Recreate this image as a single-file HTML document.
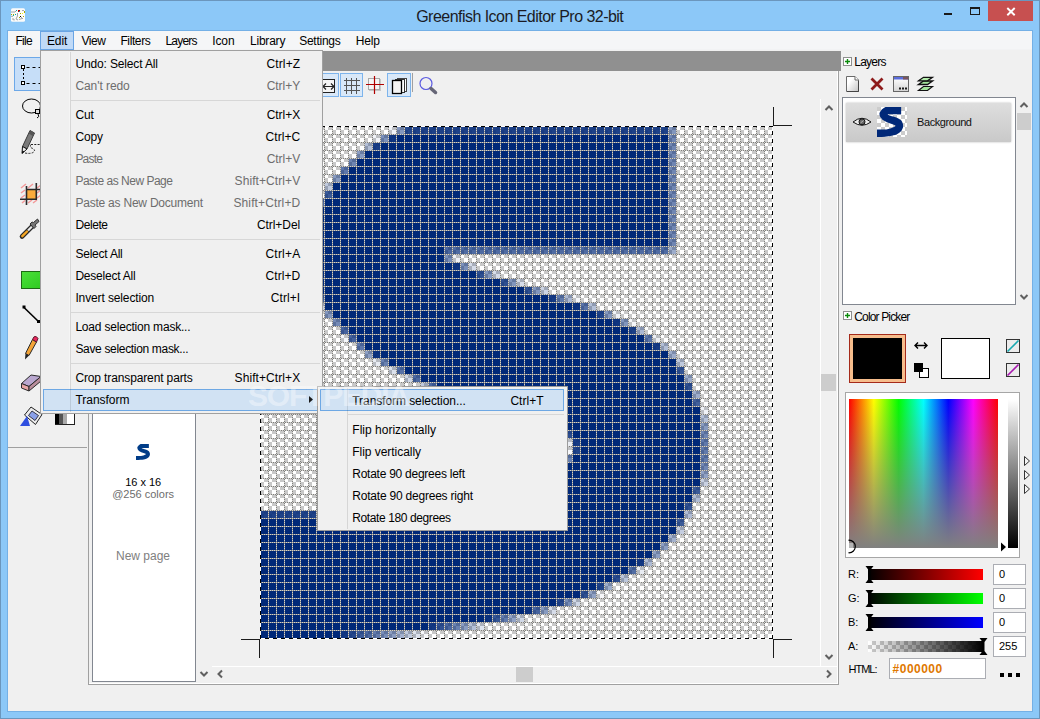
<!DOCTYPE html>
<html><head><meta charset="utf-8"><title>Greenfish Icon Editor Pro 32-bit</title>
<style>
html,body{margin:0;padding:0}
body{width:1040px;height:719px;overflow:hidden;position:relative;background:#8cc8f8;font-family:"Liberation Sans", sans-serif;font-size:12px;color:#000}
div,span.t,svg{position:absolute;box-sizing:border-box}
span.t{white-space:nowrap;display:block}

.b{background:#f0f0f0}

</style></head><body>
<div style="left:0px;top:0px;width:1040px;height:719px;border:1px solid #6b96bd"></div>
<svg style="left:11px;top:8px" width="14" height="14" viewBox="11 8 14 14"><rect x="11" y="8.200" width="14" height="13.600" rx="1.500" fill="#fbfbfa"/><path d="M11 12 h4 l1.500 -1.500 M11 16.300 h2 M17.500 13 v3 l-1.500 3 l2 1 M21 17 l2 2 M22 10.500 h2 M12 19 h2 v1.500 M19 19.500 l3 -1" stroke="#9a9a9a" stroke-width="0.900" fill="none"/><g shape-rendering="crispEdges"><rect x="16" y="10" width="1.300" height="1" fill="#0aa"/><rect x="18" y="10" width="2" height="1.800" fill="#c00000"/><rect x="19.300" y="11.200" width="1" height="1" fill="#0aa"/><rect x="21.800" y="13" width="1.300" height="1.300" fill="#ff0"/><rect x="24" y="11" width="1" height="2" fill="#a8a800"/><rect x="20" y="13" width="1" height="1" fill="#a8a800"/><rect x="15" y="14" width="1" height="1" fill="#0aa"/><rect x="11" y="14" width="1" height="1" fill="#a8a800"/><rect x="13" y="14" width="1" height="1" fill="#a8a800"/><rect x="13" y="15" width="1" height="1" fill="#0aa"/><rect x="20" y="16" width="1" height="1" fill="#000"/><rect x="19" y="17" width="1" height="1" fill="#a8a800"/><rect x="23" y="16" width="1" height="1" fill="#a8a800"/></g></svg>
<div style="left:944px;top:12.5px;width:8px;height:2px;background:#1a1a1a"></div>
<div style="left:970px;top:7px;width:10px;height:8px;border:1px solid #1a1a1a;border-top-width:2px"></div>
<div style="left:988px;top:1px;width:45px;height:20px;background:#c75050"></div>
<svg style="left:1005px;top:6px" width="12" height="11" viewBox="0 0 12 11"><path d="M2.300 2 L9.700 9.300 M9.700 2 L2.300 9.300" stroke="#fff" stroke-width="1.900" fill="none"/></svg>
<div style="left:7px;top:30px;width:1026px;height:682px;background:#74b0e6"></div>
<div style="left:8px;top:31px;width:1024px;height:680px;background:#f0f0f0"></div>
<div style="left:8px;top:31px;width:1024px;height:18px;background:#f5f6f7"></div>
<div style="left:8px;top:49px;width:1024px;height:1px;background:#f2f3f4"></div>
<div style="left:40px;top:31px;width:34px;height:19px;background:#c0daf7;border:1px solid #69a4e4"></div>
<div style="left:8px;top:447px;width:79px;height:1px;background:#a0a0a0"></div>
<div style="left:14px;top:57px;width:34px;height:34px;background:#c6def8;border:1px solid #6ca8e8"></div>
<svg style="left:8px;top:51px" width="80" height="395" viewBox="8 51 80 395">
<g fill="none" stroke="#000">
<path d="M24.500 67.500 H46 M24.500 83.500 H46" stroke-dasharray="3 3" stroke-dashoffset="-2"/>
<path d="M23.500 69 V82" stroke-dasharray="2 2"/>
<rect x="21.500" y="65.500" width="3" height="3" fill="#fff"/><rect x="21.500" y="81.500" width="3" height="3" fill="#fff"/>
<ellipse cx="31.500" cy="106" rx="9" ry="7"/>
<rect x="35.500" y="109.500" width="4" height="4" fill="#ddd"/><path d="M38 114 q2 3 -1 4"/>
</g>
<path d="M30 130.500 L34.500 133 L27 149 L22.500 146.500Z" fill="#7a7a7a" stroke="#3a3a3a"/><path d="M30 130.500 L34.500 133 L33 136 L28.700 133.500Z" fill="#555"/><path d="M22.500 146.500 L27 149 L22 153.500Z" fill="#eee" stroke="#111"/><path d="M22 153.500 l0.500 -3 2 1.200z" fill="#000"/>
<path d="M31 144.500 h9 M31 144.500 q-2 3 2 4 q3 2 0 4 q-3 1.500 -8 0.500" fill="none" stroke="#222" stroke-dasharray="2 1.300"/>
<g stroke="#f39a9a" stroke-width="1.500"><path d="M21 188 l5 -4 M21 193 l4 -3 M21 198 l4 -3 M28 188 l5 -4 M37 188 l4 -3 M37 193 l4 -3 M37 198 l4 -3 M28 203 l4 -3 M33 203 l4 -3 M22 203 l3 -2.500"/></g>
<rect x="26.500" y="189.500" width="9.500" height="9.500" fill="#fbab3c"/>
<path d="M26.500 186 V205 M20 199.300 H37 M36.300 183 V199.500 M26.500 189.500 H40" stroke="#2a2a2a" stroke-width="1.600" fill="none"/>
<path d="M22 236.500 L32.500 226" stroke="#2a2a2a" stroke-width="4.600" stroke-linecap="round" fill="none"/><path d="M22.300 236.200 L27 231.500" stroke="#f6a623" stroke-width="2.400" stroke-linecap="round" fill="none"/><path d="M28 230.500 L32 226.500" stroke="#e8e8e8" stroke-width="2.200" fill="none"/>
<path d="M30 224 L34 228.500 L36 226.500 L35 225 L39 221.500 L37.500 219 L33.500 222.500 L32 222Z" fill="#777" stroke="#333"/>
<defs><linearGradient id="gg" x1="0" y1="0" x2="1" y2="1"><stop offset="0" stop-color="#4be03a"/><stop offset="1" stop-color="#2cc81e"/></linearGradient></defs>
<rect x="21.500" y="271.500" width="24" height="17" fill="url(#gg)" stroke="#1d6a14"/>
<path d="M24 307.500 L38.500 321.500" stroke="#000" stroke-width="1.600" fill="none"/><rect x="22.500" y="305.500" width="3" height="3"/><rect x="37" y="320" width="3" height="3"/>
<path d="M32.500 339.500 L36.500 342 L29 355.500 L25.500 353.500Z" fill="#f3a336" stroke="#2a2a2a"/><path d="M25.500 353.500 L29 355.500 L25 359.500Z" fill="#222"/><path d="M32.500 339.500 L34 336.800 Q36.500 335.500 38 338.500 L36.500 342Z" fill="#e8265e" stroke="#5a1a2a"/>
<path d="M21.500 383.500 L31 375 L41 376.500 L29 386.500Z" fill="#b9a7cf" stroke="#2a2a2a"/><path d="M21.500 383.500 L29 386.500 V391 L21.500 388Z" fill="#e7a6a6" stroke="#2a2a2a"/><path d="M29 386.500 L41 376.500 V381 L29 391Z" fill="#b98e9c" stroke="#2a2a2a"/>
<path d="M24.500 415 L31 407 L42 414.500 L35.500 424.500Z" fill="#ececec" stroke="#222" stroke-linejoin="round"/><path d="M28.500 415.500 L32 411 L38.500 415.500 L35 420.500Z" fill="#8aa0e8" stroke="#334"/><path d="M20 426 H30 L27 416Z" fill="#2f4fe0"/>
</svg>
<div style="left:55px;top:413px;width:20px;height:12px;background:linear-gradient(90deg,#000 0 22%,#555 22% 42%,#aaa 42% 64%,#fff 64%);border:1px solid #222;border-left:none"></div>
<div style="left:88px;top:51px;width:751px;height:634px;border:1px solid #a0a0a0;border-top:none"></div>
<div style="left:89px;top:51px;width:749px;height:633px;border:1px solid #fff;border-top:none;border-left:none"></div>
<div style="left:89px;top:51px;width:752px;height:20px;background:#909090"></div>
<div style="left:92px;top:60px;width:104px;height:622px;background:#fff;border:1px solid #828790"></div>
<svg style="left:136px;top:444px" width="16" height="16" viewBox="0 0 64 64"><path d="M18.3 0.15 L51.5 0.15 L51.5 15.65 L23.2 15.65 L22.8 16 L23.5 16.5 L25.5 17.5 L28.5 18.5 L31.5 19.5 L34.5 20.5 L38 21.5 L41 22.5 L43.5 23.5 L45.5 24.5 L47.3 25.5 L48.7 26.5 L50.3 27.5 L51.4 28.5 L52.3 29.5 L52.8 30.5 L53.4 31.5 L53.8 32.5 L54.4 33.5 L54.7 34.5 L55 35.5 L55.3 36.5 L55.5 38 L55.6 40 L55.6 42 L55.4 43.5 L55.2 44.5 L54.7 45.5 L54.3 46.5 L53.8 47.5 L53.3 48.5 L52.7 49.5 L52.2 50.5 L51.3 51.5 L50.4 52.5 L49.4 53.5 L48.2 54.5 L46.7 55.5 L45 56.5 L43.2 57.5 L41.3 58.5 L38.5 59.5 L35.3 60.5 L31 61.5 L25 62.5 L17 63.4 L10 63.95 L0 64 L0 48.15 L20 48.15 L30 45.5 L36 42.8 L38.5 41.5 L39.4 40 L38.5 38.8 L33 36.8 L27 34.7 L21 32.5 L19.2 31.5 L17.3 30.5 L15.4 29.5 L13.6 28.5 L12.4 27.5 L11.3 26.5 L10.3 25.5 L9.5 24.5 L8.5 23.5 L7.8 22.5 L6.5 20 L5.5 17 L5.2 14 L5.8 11.5 L7 9.8 L8.25 8.5 L8.7 7.5 L9.5 6.5 L10.35 5.5 L11.4 4.5 L12.5 3.5 L13.7 2.5 L15.4 1.5Z" fill="#003c88"/></svg>
<svg style="left:197.5px;top:668px" width="12" height="12" viewBox="-6 -6 12 12"><path d="M-3.500 -2 L0 1.500 L3.500 -2" fill="none" stroke="#606060" stroke-width="2"/></svg>
<div style="left:212px;top:666px;width:625px;height:1px;background:#fff"></div>
<svg style="left:214px;top:668px" width="12" height="12" viewBox="-6 -6 12 12"><path d="M2 -3.500 L-1.500 0 L2 3.500" fill="none" stroke="#606060" stroke-width="2"/></svg>
<svg style="left:823px;top:668px" width="12" height="12" viewBox="-6 -6 12 12"><path d="M-2 -3.500 L1.500 0 L-2 3.500" fill="none" stroke="#606060" stroke-width="2"/></svg>
<div style="left:516px;top:667px;width:17px;height:15px;background:#cdcdcd"></div>
<div style="left:820px;top:99px;width:1px;height:567px;background:#fff"></div>
<svg style="left:822.5px;top:102px" width="12" height="12" viewBox="-6 -6 12 12"><path d="M-3.500 2 L0 -1.500 L3.500 2" fill="none" stroke="#606060" stroke-width="2"/></svg>
<svg style="left:822.5px;top:651px" width="12" height="12" viewBox="-6 -6 12 12"><path d="M-3.500 -2 L0 1.500 L3.500 -2" fill="none" stroke="#606060" stroke-width="2"/></svg>
<div style="left:821px;top:374px;width:15px;height:17px;background:#cdcdcd"></div>
<div style="left:300px;top:73px;width:39px;height:24px;background:#d9e8f8;border:1px solid #7db4ec"></div>
<div style="left:340px;top:73px;width:23px;height:24px;background:#d9e8f8;border:1px solid #7db4ec"></div>
<div style="left:387px;top:73px;width:24px;height:24px;background:#d9e8f8;border:1px solid #7db4ec"></div>
<svg style="left:300px;top:72px" width="150" height="27" viewBox="300 72 150 27">
<rect x="320.500" y="79.500" width="14" height="13" fill="#f4f4f4" stroke="#222"/>
<path d="M323 86.500 H334 M326 83.500 l-3 3 3 3 M331 83.500 l3 3 -3 3" stroke="#222" stroke-width="1.200" fill="none"/>
<path d="M346.500 78 V94 M351.500 78 V94 M356.500 78 V94 M344 80.500 H360 M344 85.500 H360 M344 90.500 H360" stroke="#555" stroke-width="1" fill="none"/>
<rect x="369" y="79" width="12" height="12" fill="#c8c8c8"/><rect x="368.500" y="78.500" width="11" height="11" fill="#f6f6f6" stroke="#aaa"/>
<path d="M374.500 76 V94 M366 84.500 H384" stroke="#b00000" stroke-width="1.200" fill="none"/>
<rect x="397.500" y="78.500" width="9" height="13" fill="#fff" stroke="#444"/><rect x="395.500" y="79.500" width="9" height="13" fill="#fff" stroke="#333"/>
<rect x="392.500" y="80.500" width="9" height="13" fill="#f4f4f4" stroke="#000" stroke-width="1.300"/>
<path d="M412.500 73 V92" stroke="#a0a0a0"/>
<circle cx="426" cy="83.500" r="6" fill="none" stroke="#5b5be0" stroke-width="1.200"/>
<path d="M431 88.500 L435.500 92.500" stroke="#667" stroke-width="3.500" stroke-linecap="round"/>
</svg>
<svg style="left:260px;top:126px" width="513" height="513" viewBox="0 0 513 513" shape-rendering="crispEdges">
<defs>
<pattern id="ck" width="8" height="8" patternUnits="userSpaceOnUse"><rect width="8" height="8" fill="#fff"/><rect x="4" width="4" height="4" fill="#c8c8c8"/><rect y="4" width="4" height="4" fill="#c8c8c8"/></pattern>
<pattern id="gr" width="8" height="8" patternUnits="userSpaceOnUse"><rect width="8" height="1" fill="#808080"/><rect width="1" height="8" fill="#808080"/><g fill="#d3d1cb"><rect width="1" height="1"/><rect x="2" width="1" height="1"/><rect x="4" width="1" height="1"/><rect x="6" width="1" height="1"/><rect y="2" width="1" height="1"/><rect y="4" width="1" height="1"/><rect y="6" width="1" height="1"/></g></pattern>
</defs>
<rect width="513" height="513" fill="url(#ck)"/>
<g fill="#002878"><rect x="128" y="0" width="8" height="8" opacity="0.06"/><rect x="136" y="0" width="8" height="8" opacity="0.48"/><rect x="144" y="0" width="8" height="8" opacity="0.85"/><rect x="152" y="0" width="8" height="8" opacity="0.88"/><rect x="160" y="0" width="8" height="8" opacity="0.88"/><rect x="168" y="0" width="8" height="8" opacity="0.88"/><rect x="176" y="0" width="8" height="8" opacity="0.88"/><rect x="184" y="0" width="8" height="8" opacity="0.88"/><rect x="192" y="0" width="8" height="8" opacity="0.88"/><rect x="200" y="0" width="8" height="8" opacity="0.88"/><rect x="208" y="0" width="8" height="8" opacity="0.88"/><rect x="216" y="0" width="8" height="8" opacity="0.88"/><rect x="224" y="0" width="8" height="8" opacity="0.88"/><rect x="232" y="0" width="8" height="8" opacity="0.88"/><rect x="240" y="0" width="8" height="8" opacity="0.88"/><rect x="248" y="0" width="8" height="8" opacity="0.88"/><rect x="256" y="0" width="8" height="8" opacity="0.88"/><rect x="264" y="0" width="8" height="8" opacity="0.88"/><rect x="272" y="0" width="8" height="8" opacity="0.88"/><rect x="280" y="0" width="8" height="8" opacity="0.88"/><rect x="288" y="0" width="8" height="8" opacity="0.88"/><rect x="296" y="0" width="8" height="8" opacity="0.88"/><rect x="304" y="0" width="8" height="8" opacity="0.88"/><rect x="312" y="0" width="8" height="8" opacity="0.88"/><rect x="320" y="0" width="8" height="8" opacity="0.88"/><rect x="328" y="0" width="8" height="8" opacity="0.88"/><rect x="336" y="0" width="8" height="8" opacity="0.88"/><rect x="344" y="0" width="8" height="8" opacity="0.88"/><rect x="352" y="0" width="8" height="8" opacity="0.88"/><rect x="360" y="0" width="8" height="8" opacity="0.88"/><rect x="368" y="0" width="8" height="8" opacity="0.88"/><rect x="376" y="0" width="8" height="8" opacity="0.88"/><rect x="384" y="0" width="8" height="8" opacity="0.88"/><rect x="392" y="0" width="8" height="8" opacity="0.88"/><rect x="400" y="0" width="8" height="8" opacity="0.88"/><rect x="408" y="0" width="8" height="8" opacity="0.49"/><rect x="112" y="8" width="8" height="8" opacity="0.05"/><rect x="120" y="8" width="8" height="8" opacity="0.52"/><rect x="128" y="8" width="8" height="8" opacity="0.94"/><rect x="136" y="8" width="272" height="8"/><rect x="408" y="8" width="8" height="8" opacity="0.56"/><rect x="104" y="16" width="8" height="8" opacity="0.30"/><rect x="112" y="16" width="8" height="8" opacity="0.90"/><rect x="120" y="16" width="288" height="8"/><rect x="408" y="16" width="8" height="8" opacity="0.56"/><rect x="96" y="24" width="8" height="8" opacity="0.46"/><rect x="104" y="24" width="304" height="8"/><rect x="408" y="24" width="8" height="8" opacity="0.56"/><rect x="88" y="32" width="8" height="8" opacity="0.57"/><rect x="96" y="32" width="312" height="8"/><rect x="408" y="32" width="8" height="8" opacity="0.56"/><rect x="80" y="40" width="8" height="8" opacity="0.63"/><rect x="88" y="40" width="320" height="8"/><rect x="408" y="40" width="8" height="8" opacity="0.56"/><rect x="72" y="48" width="8" height="8" opacity="0.47"/><rect x="80" y="48" width="328" height="8"/><rect x="408" y="48" width="8" height="8" opacity="0.56"/><rect x="64" y="56" width="8" height="8" opacity="0.25"/><rect x="72" y="56" width="336" height="8"/><rect x="408" y="56" width="8" height="8" opacity="0.56"/><rect x="64" y="64" width="8" height="8" opacity="0.77"/><rect x="72" y="64" width="336" height="8"/><rect x="408" y="64" width="8" height="8" opacity="0.56"/><rect x="56" y="72" width="8" height="8" opacity="0.70"/><rect x="64" y="72" width="344" height="8"/><rect x="408" y="72" width="8" height="8" opacity="0.56"/><rect x="48" y="80" width="8" height="8" opacity="0.52"/><rect x="56" y="80" width="352" height="8"/><rect x="408" y="80" width="8" height="8" opacity="0.56"/><rect x="40" y="88" width="8" height="8" opacity="0.18"/><rect x="48" y="88" width="360" height="8"/><rect x="408" y="88" width="8" height="8" opacity="0.56"/><rect x="40" y="96" width="8" height="8" opacity="0.46"/><rect x="48" y="96" width="360" height="8"/><rect x="408" y="96" width="8" height="8" opacity="0.56"/><rect x="40" y="104" width="8" height="8" opacity="0.70"/><rect x="48" y="104" width="360" height="8"/><rect x="408" y="104" width="8" height="8" opacity="0.56"/><rect x="40" y="112" width="8" height="8" opacity="0.77"/><rect x="48" y="112" width="360" height="8"/><rect x="408" y="112" width="8" height="8" opacity="0.56"/><rect x="40" y="120" width="8" height="8" opacity="0.66"/><rect x="48" y="120" width="136" height="8"/><rect x="184" y="120" width="8" height="8" opacity="0.71"/><rect x="192" y="120" width="8" height="8" opacity="0.69"/><rect x="200" y="120" width="8" height="8" opacity="0.69"/><rect x="208" y="120" width="8" height="8" opacity="0.69"/><rect x="216" y="120" width="8" height="8" opacity="0.69"/><rect x="224" y="120" width="8" height="8" opacity="0.69"/><rect x="232" y="120" width="8" height="8" opacity="0.69"/><rect x="240" y="120" width="8" height="8" opacity="0.69"/><rect x="248" y="120" width="8" height="8" opacity="0.69"/><rect x="256" y="120" width="8" height="8" opacity="0.69"/><rect x="264" y="120" width="8" height="8" opacity="0.69"/><rect x="272" y="120" width="8" height="8" opacity="0.69"/><rect x="280" y="120" width="8" height="8" opacity="0.69"/><rect x="288" y="120" width="8" height="8" opacity="0.69"/><rect x="296" y="120" width="8" height="8" opacity="0.69"/><rect x="304" y="120" width="8" height="8" opacity="0.69"/><rect x="312" y="120" width="8" height="8" opacity="0.69"/><rect x="320" y="120" width="8" height="8" opacity="0.69"/><rect x="328" y="120" width="8" height="8" opacity="0.69"/><rect x="336" y="120" width="8" height="8" opacity="0.69"/><rect x="344" y="120" width="8" height="8" opacity="0.69"/><rect x="352" y="120" width="8" height="8" opacity="0.69"/><rect x="360" y="120" width="8" height="8" opacity="0.69"/><rect x="368" y="120" width="8" height="8" opacity="0.69"/><rect x="376" y="120" width="8" height="8" opacity="0.69"/><rect x="384" y="120" width="8" height="8" opacity="0.69"/><rect x="392" y="120" width="8" height="8" opacity="0.69"/><rect x="400" y="120" width="8" height="8" opacity="0.69"/><rect x="408" y="120" width="8" height="8" opacity="0.39"/><rect x="40" y="128" width="8" height="8" opacity="0.55"/><rect x="48" y="128" width="136" height="8"/><rect x="184" y="128" width="8" height="8" opacity="0.52"/><rect x="192" y="128" width="8" height="8" opacity="0.06"/><rect x="40" y="136" width="8" height="8" opacity="0.34"/><rect x="48" y="136" width="144" height="8"/><rect x="192" y="136" width="8" height="8" opacity="0.94"/><rect x="200" y="136" width="8" height="8" opacity="0.52"/><rect x="208" y="136" width="8" height="8" opacity="0.16"/><rect x="40" y="144" width="8" height="8" opacity="0.05"/><rect x="48" y="144" width="8" height="8" opacity="0.96"/><rect x="56" y="144" width="160" height="8"/><rect x="216" y="144" width="8" height="8" opacity="0.82"/><rect x="224" y="144" width="8" height="8" opacity="0.49"/><rect x="232" y="144" width="8" height="8" opacity="0.16"/><rect x="48" y="152" width="8" height="8" opacity="0.68"/><rect x="56" y="152" width="184" height="8"/><rect x="240" y="152" width="8" height="8" opacity="0.82"/><rect x="248" y="152" width="8" height="8" opacity="0.49"/><rect x="256" y="152" width="8" height="8" opacity="0.16"/><rect x="48" y="160" width="8" height="8" opacity="0.25"/><rect x="56" y="160" width="208" height="8"/><rect x="264" y="160" width="8" height="8" opacity="0.82"/><rect x="272" y="160" width="8" height="8" opacity="0.49"/><rect x="280" y="160" width="8" height="8" opacity="0.20"/><rect x="56" y="168" width="8" height="8" opacity="0.75"/><rect x="64" y="168" width="224" height="8"/><rect x="288" y="168" width="8" height="8" opacity="0.91"/><rect x="296" y="168" width="8" height="8" opacity="0.62"/><rect x="304" y="168" width="8" height="8" opacity="0.32"/><rect x="312" y="168" width="8" height="8" opacity="0.04"/><rect x="56" y="176" width="8" height="8" opacity="0.23"/><rect x="64" y="176" width="248" height="8"/><rect x="312" y="176" width="8" height="8" opacity="0.95"/><rect x="320" y="176" width="8" height="8" opacity="0.66"/><rect x="328" y="176" width="8" height="8" opacity="0.29"/><rect x="64" y="184" width="8" height="8" opacity="0.49"/><rect x="72" y="184" width="264" height="8"/><rect x="336" y="184" width="8" height="8" opacity="0.88"/><rect x="344" y="184" width="8" height="8" opacity="0.48"/><rect x="352" y="184" width="8" height="8" opacity="0.06"/><rect x="72" y="192" width="8" height="8" opacity="0.55"/><rect x="80" y="192" width="272" height="8"/><rect x="352" y="192" width="8" height="8" opacity="0.94"/><rect x="360" y="192" width="8" height="8" opacity="0.49"/><rect x="368" y="192" width="8" height="8" opacity="0.04"/><rect x="80" y="200" width="8" height="8" opacity="0.73"/><rect x="88" y="200" width="280" height="8"/><rect x="368" y="200" width="8" height="8" opacity="0.89"/><rect x="376" y="200" width="8" height="8" opacity="0.33"/><rect x="80" y="208" width="8" height="8" opacity="0.04"/><rect x="88" y="208" width="8" height="8" opacity="0.73"/><rect x="96" y="208" width="288" height="8"/><rect x="384" y="208" width="8" height="8" opacity="0.64"/><rect x="392" y="208" width="8" height="8" opacity="0.07"/><rect x="96" y="216" width="8" height="8" opacity="0.63"/><rect x="104" y="216" width="288" height="8"/><rect x="392" y="216" width="8" height="8" opacity="0.91"/><rect x="400" y="216" width="8" height="8" opacity="0.30"/><rect x="104" y="224" width="8" height="8" opacity="0.45"/><rect x="112" y="224" width="8" height="8" opacity="0.95"/><rect x="120" y="224" width="288" height="8"/><rect x="408" y="224" width="8" height="8" opacity="0.38"/><rect x="112" y="232" width="8" height="8" opacity="0.09"/><rect x="120" y="232" width="8" height="8" opacity="0.59"/><rect x="128" y="232" width="288" height="8"/><rect x="416" y="232" width="8" height="8" opacity="0.25"/><rect x="128" y="240" width="8" height="8" opacity="0.14"/><rect x="136" y="240" width="8" height="8" opacity="0.66"/><rect x="144" y="240" width="272" height="8"/><rect x="416" y="240" width="8" height="8" opacity="0.79"/><rect x="144" y="248" width="8" height="8" opacity="0.19"/><rect x="152" y="248" width="8" height="8" opacity="0.70"/><rect x="160" y="248" width="264" height="8"/><rect x="424" y="248" width="8" height="8" opacity="0.39"/><rect x="160" y="256" width="8" height="8" opacity="0.25"/><rect x="168" y="256" width="8" height="8" opacity="0.71"/><rect x="176" y="256" width="248" height="8"/><rect x="424" y="256" width="8" height="8" opacity="0.82"/><rect x="176" y="264" width="8" height="8" opacity="0.09"/><rect x="184" y="264" width="8" height="8" opacity="0.44"/><rect x="192" y="264" width="8" height="8" opacity="0.81"/><rect x="200" y="264" width="232" height="8"/><rect x="432" y="264" width="8" height="8" opacity="0.38"/><rect x="200" y="272" width="8" height="8" opacity="0.17"/><rect x="208" y="272" width="8" height="8" opacity="0.54"/><rect x="216" y="272" width="8" height="8" opacity="0.88"/><rect x="224" y="272" width="208" height="8"/><rect x="432" y="272" width="8" height="8" opacity="0.74"/><rect x="224" y="280" width="8" height="8" opacity="0.24"/><rect x="232" y="280" width="8" height="8" opacity="0.57"/><rect x="240" y="280" width="8" height="8" opacity="0.91"/><rect x="248" y="280" width="192" height="8"/><rect x="440" y="280" width="8" height="8" opacity="0.06"/><rect x="248" y="288" width="8" height="8" opacity="0.26"/><rect x="256" y="288" width="8" height="8" opacity="0.61"/><rect x="264" y="288" width="8" height="8" opacity="0.93"/><rect x="272" y="288" width="168" height="8"/><rect x="440" y="288" width="8" height="8" opacity="0.29"/><rect x="272" y="296" width="8" height="8" opacity="0.32"/><rect x="280" y="296" width="8" height="8" opacity="0.69"/><rect x="288" y="296" width="152" height="8"/><rect x="440" y="296" width="8" height="8" opacity="0.47"/><rect x="288" y="304" width="8" height="8" opacity="0.07"/><rect x="296" y="304" width="8" height="8" opacity="0.41"/><rect x="304" y="304" width="8" height="8" opacity="0.83"/><rect x="312" y="304" width="128" height="8"/><rect x="440" y="304" width="8" height="8" opacity="0.56"/><rect x="304" y="312" width="8" height="8" opacity="0.08"/><rect x="312" y="312" width="8" height="8" opacity="0.91"/><rect x="320" y="312" width="120" height="8"/><rect x="440" y="312" width="8" height="8" opacity="0.62"/><rect x="304" y="320" width="8" height="8" opacity="0.03"/><rect x="312" y="320" width="8" height="8" opacity="0.87"/><rect x="320" y="320" width="120" height="8"/><rect x="440" y="320" width="8" height="8" opacity="0.62"/><rect x="296" y="328" width="8" height="8" opacity="0.05"/><rect x="304" y="328" width="8" height="8" opacity="0.59"/><rect x="312" y="328" width="128" height="8"/><rect x="440" y="328" width="8" height="8" opacity="0.62"/><rect x="280" y="336" width="8" height="8" opacity="0.05"/><rect x="288" y="336" width="8" height="8" opacity="0.47"/><rect x="296" y="336" width="8" height="8" opacity="0.92"/><rect x="304" y="336" width="136" height="8"/><rect x="440" y="336" width="8" height="8" opacity="0.56"/><rect x="264" y="344" width="8" height="8" opacity="0.10"/><rect x="272" y="344" width="8" height="8" opacity="0.53"/><rect x="280" y="344" width="8" height="8" opacity="0.94"/><rect x="288" y="344" width="152" height="8"/><rect x="440" y="344" width="8" height="8" opacity="0.43"/><rect x="248" y="352" width="8" height="8" opacity="0.16"/><rect x="256" y="352" width="8" height="8" opacity="0.61"/><rect x="264" y="352" width="176" height="8"/><rect x="440" y="352" width="8" height="8" opacity="0.21"/><rect x="224" y="360" width="8" height="8" opacity="0.08"/><rect x="232" y="360" width="8" height="8" opacity="0.34"/><rect x="240" y="360" width="8" height="8" opacity="0.70"/><rect x="248" y="360" width="184" height="8"/><rect x="432" y="360" width="8" height="8" opacity="0.77"/><rect x="192" y="368" width="8" height="8" opacity="0.05"/><rect x="200" y="368" width="8" height="8" opacity="0.29"/><rect x="208" y="368" width="8" height="8" opacity="0.55"/><rect x="216" y="368" width="8" height="8" opacity="0.81"/><rect x="224" y="368" width="208" height="8"/><rect x="432" y="368" width="8" height="8" opacity="0.31"/><rect x="168" y="376" width="8" height="8" opacity="0.24"/><rect x="176" y="376" width="8" height="8" opacity="0.50"/><rect x="184" y="376" width="8" height="8" opacity="0.76"/><rect x="192" y="376" width="232" height="8"/><rect x="424" y="376" width="8" height="8" opacity="0.81"/><rect x="0" y="384" width="8" height="8" opacity="0.88"/><rect x="8" y="384" width="8" height="8" opacity="0.88"/><rect x="16" y="384" width="8" height="8" opacity="0.88"/><rect x="24" y="384" width="8" height="8" opacity="0.88"/><rect x="32" y="384" width="8" height="8" opacity="0.88"/><rect x="40" y="384" width="8" height="8" opacity="0.88"/><rect x="48" y="384" width="8" height="8" opacity="0.88"/><rect x="56" y="384" width="8" height="8" opacity="0.88"/><rect x="64" y="384" width="8" height="8" opacity="0.88"/><rect x="72" y="384" width="8" height="8" opacity="0.88"/><rect x="80" y="384" width="8" height="8" opacity="0.88"/><rect x="88" y="384" width="8" height="8" opacity="0.88"/><rect x="96" y="384" width="8" height="8" opacity="0.88"/><rect x="104" y="384" width="8" height="8" opacity="0.88"/><rect x="112" y="384" width="8" height="8" opacity="0.88"/><rect x="120" y="384" width="8" height="8" opacity="0.88"/><rect x="128" y="384" width="8" height="8" opacity="0.88"/><rect x="136" y="384" width="8" height="8" opacity="0.88"/><rect x="144" y="384" width="8" height="8" opacity="0.88"/><rect x="152" y="384" width="8" height="8" opacity="0.88"/><rect x="160" y="384" width="8" height="8" opacity="0.95"/><rect x="168" y="384" width="256" height="8"/><rect x="424" y="384" width="8" height="8" opacity="0.31"/><rect x="0" y="392" width="416" height="8"/><rect x="416" y="392" width="8" height="8" opacity="0.77"/><rect x="0" y="400" width="416" height="8"/><rect x="416" y="400" width="8" height="8" opacity="0.23"/><rect x="0" y="408" width="408" height="8"/><rect x="408" y="408" width="8" height="8" opacity="0.36"/><rect x="0" y="416" width="400" height="8"/><rect x="400" y="416" width="8" height="8" opacity="0.45"/><rect x="0" y="424" width="392" height="8"/><rect x="392" y="424" width="8" height="8" opacity="0.45"/><rect x="0" y="432" width="376" height="8"/><rect x="376" y="432" width="8" height="8" opacity="0.93"/><rect x="384" y="432" width="8" height="8" opacity="0.32"/><rect x="0" y="440" width="368" height="8"/><rect x="368" y="440" width="8" height="8" opacity="0.68"/><rect x="376" y="440" width="8" height="8" opacity="0.09"/><rect x="0" y="448" width="352" height="8"/><rect x="352" y="448" width="8" height="8" opacity="0.83"/><rect x="360" y="448" width="8" height="8" opacity="0.27"/><rect x="0" y="456" width="336" height="8"/><rect x="336" y="456" width="8" height="8" opacity="0.88"/><rect x="344" y="456" width="8" height="8" opacity="0.39"/><rect x="0" y="464" width="320" height="8"/><rect x="320" y="464" width="8" height="8" opacity="0.82"/><rect x="328" y="464" width="8" height="8" opacity="0.43"/><rect x="336" y="464" width="8" height="8" opacity="0.03"/><rect x="0" y="472" width="296" height="8"/><rect x="296" y="472" width="8" height="8" opacity="0.86"/><rect x="304" y="472" width="8" height="8" opacity="0.54"/><rect x="312" y="472" width="8" height="8" opacity="0.19"/><rect x="0" y="480" width="264" height="8"/><rect x="264" y="480" width="8" height="8" opacity="0.95"/><rect x="272" y="480" width="8" height="8" opacity="0.72"/><rect x="280" y="480" width="8" height="8" opacity="0.47"/><rect x="288" y="480" width="8" height="8" opacity="0.16"/><rect x="0" y="488" width="224" height="8"/><rect x="224" y="488" width="8" height="8" opacity="0.95"/><rect x="232" y="488" width="8" height="8" opacity="0.79"/><rect x="240" y="488" width="8" height="8" opacity="0.62"/><rect x="248" y="488" width="8" height="8" opacity="0.43"/><rect x="256" y="488" width="8" height="8" opacity="0.19"/><rect x="0" y="496" width="168" height="8"/><rect x="168" y="496" width="8" height="8" opacity="0.92"/><rect x="176" y="496" width="8" height="8" opacity="0.81"/><rect x="184" y="496" width="8" height="8" opacity="0.71"/><rect x="192" y="496" width="8" height="8" opacity="0.59"/><rect x="200" y="496" width="8" height="8" opacity="0.46"/><rect x="208" y="496" width="8" height="8" opacity="0.29"/><rect x="216" y="496" width="8" height="8" opacity="0.12"/><rect x="0" y="504" width="80" height="8"/><rect x="80" y="504" width="8" height="8" opacity="0.93"/><rect x="88" y="504" width="8" height="8" opacity="0.85"/><rect x="96" y="504" width="8" height="8" opacity="0.77"/><rect x="104" y="504" width="8" height="8" opacity="0.70"/><rect x="112" y="504" width="8" height="8" opacity="0.61"/><rect x="120" y="504" width="8" height="8" opacity="0.53"/><rect x="128" y="504" width="8" height="8" opacity="0.46"/><rect x="136" y="504" width="8" height="8" opacity="0.36"/><rect x="144" y="504" width="8" height="8" opacity="0.25"/><rect x="152" y="504" width="8" height="8" opacity="0.14"/><rect x="160" y="504" width="8" height="8" opacity="0.03"/></g>
<rect width="513" height="513" fill="url(#gr)"/>
<path d="M0 0.500 H513 M0 512.500 H513 M0.500 0 V513 M512.500 0 V513" fill="none" stroke="#fff"/><path d="M0 0.500 H513 M0 512.500 H513 M0.500 0 V513 M512.500 0 V513" fill="none" stroke="#000" stroke-dasharray="4 4" stroke-dashoffset="3"/>
</svg>
<div style="left:241px;top:125px;width:19px;height:1px;background:#1c1c1c"></div>
<div style="left:259px;top:107px;width:1px;height:19px;background:#1c1c1c"></div>
<div style="left:773px;top:107px;width:1px;height:19px;background:#1c1c1c"></div>
<div style="left:773px;top:125px;width:19px;height:1px;background:#1c1c1c"></div>
<div style="left:241px;top:639px;width:19px;height:1px;background:#1c1c1c"></div>
<div style="left:259px;top:639px;width:1px;height:19px;background:#1c1c1c"></div>
<div style="left:773px;top:639px;width:19px;height:1px;background:#1c1c1c"></div>
<div style="left:773px;top:639px;width:1px;height:19px;background:#1c1c1c"></div>
<svg style="left:843px;top:57px" width="9" height="9" viewBox="0 0 9 9"><rect x="0.500" y="0.500" width="8" height="8" fill="#fff" stroke="#8e8e8e"/><path d="M2 4.500 H7 M4.500 2 V7" stroke="#0a8a0a" stroke-width="1.400"/></svg>
<svg style="left:842px;top:72px" width="100" height="24" viewBox="842 72 100 24">
<defs><linearGradient id="pg" x1="0" y1="0" x2="1" y2="1"><stop offset="0.300" stop-color="#fff"/><stop offset="1" stop-color="#c4c4c4"/></linearGradient>
<linearGradient id="wg" x1="0" y1="0" x2="0" y2="1"><stop offset="0.200" stop-color="#fafafa"/><stop offset="1" stop-color="#d4d4d4"/></linearGradient></defs>
<path d="M846.500 76.500 H855 L858.500 80 V91.500 H846.500 Z" fill="url(#pg)" stroke="#6a6a6a"/><path d="M855 76.500 V80 H858.500" fill="#fff" stroke="#6a6a6a"/><path d="M847 91.500 H858.500 V81" fill="none" stroke="#444"/>
<path d="M871.500 78.500 L882.500 89.500 M882.500 78.500 L871.500 89.500" stroke="#8e1b1b" stroke-width="2.800" fill="none"/>
<rect x="893.500" y="76.500" width="15" height="15" fill="url(#wg)" stroke="#666"/><rect x="894" y="77" width="14" height="2.500" fill="#5b6ddc"/><rect x="903" y="77" width="5" height="2.500" fill="#7a5560"/>
<rect x="899" y="87.500" width="2" height="2" fill="#1a1a1a"/><rect x="902" y="87.500" width="2" height="2" fill="#1a1a1a"/><rect x="905" y="87.500" width="2" height="2" fill="#1a1a1a"/>
<path d="M918.500 90.500 l5 -4 h9 l-5 4z" fill="#a4e49c" stroke="#111" stroke-width="1.200"/><path d="M918.500 84.500 l5 -3.500 h9 l-5 3.500z" fill="#a4e49c" stroke="#111" stroke-width="1.400"/><path d="M918.500 80.800 l5 -3.500 h9 l-5 3.500z" fill="#b4ecac" stroke="#111" stroke-width="1.200"/>
</svg>
<div style="left:842px;top:97px;width:174px;height:208px;background:#fff;border:1px solid #828790"></div>
<div style="left:846px;top:103px;width:165px;height:39px;background:linear-gradient(#dedede,#c9c9c9);box-shadow:0 0 2px #bbb"></div>
<svg style="left:852px;top:115px" width="20" height="14" viewBox="0 0 20 14"><path d="M1 7 Q10 -0.500 19 7 Q10 13.500 1 7Z" fill="#ececec" stroke="#111" stroke-width="1"/><circle cx="10" cy="6.800" r="3" fill="#666" stroke="#111" stroke-width="1"/><path d="M8.500 8 L11.500 5.500" stroke="#ccc" stroke-width="0.800"/></svg>
<svg style="left:877px;top:107px" width="30" height="30" viewBox="0 0 30 30"><defs><pattern id="ck2" width="8" height="8" patternUnits="userSpaceOnUse"><rect width="8" height="8" fill="#fff"/><rect width="4" height="4" fill="#ccc"/><rect x="4" y="4" width="4" height="4" fill="#ccc"/></pattern></defs><rect width="30" height="30" fill="url(#ck2)"/>
<g transform="scale(0.469)"><path d="M18.3 0.15 L51.5 0.15 L51.5 15.65 L23.2 15.65 L22.8 16 L23.5 16.5 L25.5 17.5 L28.5 18.5 L31.5 19.5 L34.5 20.5 L38 21.5 L41 22.5 L43.5 23.5 L45.5 24.5 L47.3 25.5 L48.7 26.5 L50.3 27.5 L51.4 28.5 L52.3 29.5 L52.8 30.5 L53.4 31.5 L53.8 32.5 L54.4 33.5 L54.7 34.5 L55 35.5 L55.3 36.5 L55.5 38 L55.6 40 L55.6 42 L55.4 43.5 L55.2 44.5 L54.7 45.5 L54.3 46.5 L53.8 47.5 L53.3 48.5 L52.7 49.5 L52.2 50.5 L51.3 51.5 L50.4 52.5 L49.4 53.5 L48.2 54.5 L46.7 55.5 L45 56.5 L43.2 57.5 L41.3 58.5 L38.5 59.5 L35.3 60.5 L31 61.5 L25 62.5 L17 63.4 L10 63.95 L0 64 L0 48.15 L20 48.15 L30 45.5 L36 42.8 L38.5 41.5 L39.4 40 L38.5 38.8 L33 36.8 L27 34.7 L21 32.5 L19.2 31.5 L17.3 30.5 L15.4 29.5 L13.6 28.5 L12.4 27.5 L11.3 26.5 L10.3 25.5 L9.5 24.5 L8.5 23.5 L7.8 22.5 L6.5 20 L5.5 17 L5.2 14 L5.8 11.5 L7 9.8 L8.25 8.5 L8.7 7.5 L9.5 6.5 L10.35 5.5 L11.4 4.5 L12.5 3.5 L13.7 2.5 L15.4 1.5Z" fill="#002878"/></g></svg>
<svg style="left:1018px;top:98.5px" width="12" height="12" viewBox="-6 -6 12 12"><path d="M-3.500 2 L0 -1.500 L3.500 2" fill="none" stroke="#606060" stroke-width="2"/></svg>
<svg style="left:1018px;top:291px" width="12" height="12" viewBox="-6 -6 12 12"><path d="M-3.500 -2 L0 1.500 L3.500 -2" fill="none" stroke="#606060" stroke-width="2"/></svg>
<div style="left:1017px;top:113px;width:14px;height:17px;background:#cdcdcd"></div>
<svg style="left:843px;top:311px" width="9" height="9" viewBox="0 0 9 9"><rect x="0.500" y="0.500" width="8" height="8" fill="#fff" stroke="#8e8e8e"/><path d="M2 4.500 H7 M4.500 2 V7" stroke="#0a8a0a" stroke-width="1.400"/></svg>
<div style="left:849px;top:334px;width:57px;height:49px;background:#f6bd8c;border:1px solid #a52a1a"></div>
<div style="left:853px;top:338px;width:49px;height:41px;background:#000"></div>
<div style="left:941px;top:338px;width:49px;height:41px;background:#fff;border:1px solid #000"></div>
<svg style="left:912px;top:338px" width="20" height="42" viewBox="912 338 20 42">
<path d="M915 345.500 H927 M918 342.500 l-3 3 3 3 M924 342.500 l3 3 -3 3" stroke="#000" stroke-width="1.400" fill="none"/>
<rect x="919.500" y="368.500" width="9" height="9" fill="#fff" stroke="#000"/><rect x="914" y="363" width="9" height="9" fill="#000"/>
</svg>
<svg style="left:1005px;top:338px" width="16" height="40" viewBox="1005 338 16 40">
<rect x="1006.500" y="339.500" width="13" height="13" fill="#ececec" stroke="#333"/><path d="M1007.500 351.500 L1018.500 340.500" stroke="#18a8b0" stroke-width="1.600"/>
<rect x="1006.500" y="363.500" width="13" height="13" fill="#ececec" stroke="#333"/><path d="M1007.500 375.500 L1018.500 364.500" stroke="#a818b0" stroke-width="1.600"/>
</svg>
<div style="left:845px;top:392px;width:175px;height:166px;background:#fff;border:1px solid #a6a6a6"></div>
<div style="left:849px;top:399px;width:149px;height:149px;background:linear-gradient(to bottom,rgba(128,128,128,0),#808080),linear-gradient(to right,#f00,#ff0 16.670%,#0f0 33.330%,#0ff 50%,#00f 66.670%,#f0f 83.330%,#f00)"></div>
<div style="left:1008px;top:399px;width:10px;height:149px;background:linear-gradient(#fff,#000)"></div>
<svg style="left:843px;top:455px" width="190" height="100" viewBox="843 455 190 100">
<path d="M1001 542.500 L1006 547 L1001 551.500Z" fill="#000"/>
<g fill="#f4f4f4" stroke="#333"><path d="M1024.500 456.500 L1029.500 461 L1024.500 465.500Z"/><path d="M1024.500 470.500 L1029.500 475 L1024.500 479.500Z"/><path d="M1024.500 484.500 L1029.500 489 L1024.500 493.500Z"/></g>
<clipPath id="mc"><rect x="848.500" y="538" width="12" height="18"/></clipPath><g clip-path="url(#mc)"><circle cx="849" cy="546.500" r="6.300" fill="none" stroke="#000" stroke-width="1.200"/><rect x="849" y="543" width="4" height="5" fill="#b4b4b4"/></g>
</svg>
<div style="left:868px;top:569px;width:115px;height:11px;background:linear-gradient(90deg,#000,#f00)"></div>
<svg style="left:863.5px;top:565px" width="11" height="19" viewBox="-5.500 0 11 19"><path d="M-4 1 H4 L1 5 V14 L4 18 H-4 L-1 14 V5Z" fill="#000"/></svg>
<div style="left:993px;top:564px;width:33px;height:21px;background:#fff;border:1px solid #abadb3"></div>
<div style="left:868px;top:593px;width:115px;height:11px;background:linear-gradient(90deg,#000,#0f0)"></div>
<svg style="left:863.5px;top:589px" width="11" height="19" viewBox="-5.500 0 11 19"><path d="M-4 1 H4 L1 5 V14 L4 18 H-4 L-1 14 V5Z" fill="#000"/></svg>
<div style="left:993px;top:588px;width:33px;height:21px;background:#fff;border:1px solid #abadb3"></div>
<div style="left:868px;top:617px;width:115px;height:11px;background:linear-gradient(90deg,#000,#00f)"></div>
<svg style="left:863.5px;top:613px" width="11" height="19" viewBox="-5.500 0 11 19"><path d="M-4 1 H4 L1 5 V14 L4 18 H-4 L-1 14 V5Z" fill="#000"/></svg>
<div style="left:993px;top:612px;width:33px;height:21px;background:#fff;border:1px solid #abadb3"></div>
<div style="left:868px;top:641px;width:115px;height:11px;background:linear-gradient(90deg,rgba(0,0,0,0),#000),repeating-conic-gradient(#ccc 0 25%,#fff 0 50%) 0 0/8px 8px"></div>
<svg style="left:977.5px;top:637px" width="11" height="19" viewBox="-5.500 0 11 19"><path d="M-4 1 H4 L1 5 V14 L4 18 H-4 L-1 14 V5Z" fill="#000"/></svg>
<div style="left:993px;top:636px;width:33px;height:21px;background:#fff;border:1px solid #abadb3"></div>
<div style="left:889px;top:658px;width:97px;height:21px;background:#fff;border:1px solid #abadb3"></div>
<div style="left:1000px;top:673px;width:4px;height:4px;background:#000"></div>
<div style="left:1008px;top:673px;width:4px;height:4px;background:#000"></div>
<div style="left:1016px;top:673px;width:4px;height:4px;background:#000"></div>
<div style="left:40px;top:50px;width:283px;height:364px;background:#f0f0f0;border:1px solid #a0a0a0"></div>
<div style="left:69px;top:52px;width:1px;height:360px;background:#f5f5f5"></div>
<div style="left:71px;top:100px;width:249px;height:1px;background:#d7d7d7"></div>
<div style="left:71px;top:239px;width:249px;height:1px;background:#d7d7d7"></div>
<div style="left:71px;top:312px;width:249px;height:1px;background:#d7d7d7"></div>
<div style="left:71px;top:363px;width:249px;height:1px;background:#d7d7d7"></div>
<div style="left:43px;top:389px;width:275px;height:22px;background:#d1e2f3;border:1px solid #6ea8e4"></div>
<div style="left:70px;top:52px;width:1px;height:360px;background:rgba(0,0,0,0.105)"></div>
<svg style="left:308px;top:395px" width="6" height="9" viewBox="0 0 6 9"><path d="M1 1 L5 4.500 L1 8Z" fill="#1a1a1a"/></svg>
<div style="left:317px;top:386px;width:251px;height:145px;background:#f0f0f0;border:1px solid #9c9c9c"></div>
<div style="left:348px;top:414px;width:216px;height:1px;background:#d7d7d7"></div>
<div style="left:320px;top:389px;width:244px;height:22px;background:#d1e2f3;border:1px solid #6ea8e4"></div>
<div style="left:347px;top:388px;width:1px;height:141px;background:rgba(0,0,0,0.105)"></div>
<span class="t" style="left:416.20px;top:6.60px;height:20px;line-height:20px;font-size:16px;letter-spacing:-0.533px;color:#1b1b24">Greenfish Icon Editor Pro 32-bit</span>
<span class="t" style="left:15.40px;top:33.40px;height:16px;line-height:16px;font-size:12px;letter-spacing:-0.681px;">File</span>
<span class="t" style="left:46.90px;top:33.40px;height:16px;line-height:16px;font-size:12px;letter-spacing:-0.096px;">Edit</span>
<span class="t" style="left:81.50px;top:33.40px;height:16px;line-height:16px;font-size:12px;letter-spacing:-0.499px;">View</span>
<span class="t" style="left:120.40px;top:33.40px;height:16px;line-height:16px;font-size:12px;letter-spacing:-0.379px;">Filters</span>
<span class="t" style="left:165.40px;top:33.40px;height:16px;line-height:16px;font-size:12px;letter-spacing:-0.766px;">Layers</span>
<span class="t" style="left:212.30px;top:33.40px;height:16px;line-height:16px;font-size:12px;letter-spacing:-0.129px;">Icon</span>
<span class="t" style="left:250.00px;top:33.40px;height:16px;line-height:16px;font-size:12px;letter-spacing:-0.215px;">Library</span>
<span class="t" style="left:299.20px;top:33.40px;height:16px;line-height:16px;font-size:12px;letter-spacing:-0.251px;">Settings</span>
<span class="t" style="left:355.80px;top:33.40px;height:16px;line-height:16px;font-size:12px;letter-spacing:-0.163px;">Help</span>
<span class="t" style="left:125.15px;top:474.50px;height:15px;line-height:15px;font-size:11px;letter-spacing:0.000px;color:#000;">16 x 16</span>
<span class="t" style="left:112.14px;top:487.00px;height:15px;line-height:15px;font-size:11px;letter-spacing:0.000px;color:#6d6d6d">@256 colors</span>
<span class="t" style="left:115.98px;top:548.00px;height:16px;line-height:16px;font-size:12px;letter-spacing:0.000px;color:#808080">New page</span>
<span class="t" style="left:854.30px;top:54.20px;height:16px;line-height:16px;font-size:12px;letter-spacing:-0.766px;">Layers</span>
<span class="t" style="left:917.00px;top:115.20px;height:15px;line-height:15px;font-size:11px;letter-spacing:-0.413px;color:#111">Background</span>
<span class="t" style="left:854.30px;top:309.20px;height:16px;line-height:16px;font-size:12px;letter-spacing:-0.851px;">Color Picker</span>
<span class="t" style="left:848.00px;top:566.50px;height:15px;line-height:15px;font-size:11px;letter-spacing:0.000px;">R:</span>
<span class="t" style="left:999.00px;top:567.00px;height:15px;line-height:15px;font-size:11px;letter-spacing:0.000px;">0</span>
<span class="t" style="left:848.00px;top:590.50px;height:15px;line-height:15px;font-size:11px;letter-spacing:0.000px;">G:</span>
<span class="t" style="left:999.00px;top:591.00px;height:15px;line-height:15px;font-size:11px;letter-spacing:0.000px;">0</span>
<span class="t" style="left:848.00px;top:614.50px;height:15px;line-height:15px;font-size:11px;letter-spacing:0.000px;">B:</span>
<span class="t" style="left:999.00px;top:615.00px;height:15px;line-height:15px;font-size:11px;letter-spacing:0.000px;">0</span>
<span class="t" style="left:848.00px;top:638.50px;height:15px;line-height:15px;font-size:11px;letter-spacing:0.000px;">A:</span>
<span class="t" style="left:999.00px;top:639.00px;height:15px;line-height:15px;font-size:11px;letter-spacing:0.000px;">255</span>
<span class="t" style="left:848.50px;top:661.50px;height:15px;line-height:15px;font-size:11px;letter-spacing:-1.000px;">HTML:</span>
<span class="t" style="left:892.60px;top:660.50px;height:16px;line-height:16px;font-size:12px;letter-spacing:0.480px;color:#e07800;font-weight:bold">#000000</span>
<span class="t" style="left:75.40px;top:56.00px;height:16px;line-height:16px;font-size:12px;letter-spacing:-0.141px;">Undo: Select All</span>
<span class="t" style="left:266.40px;top:56.00px;height:16px;line-height:16px;font-size:12px;letter-spacing:0.160px;">Ctrl+Z</span>
<span class="t" style="left:75.40px;top:78.00px;height:16px;line-height:16px;font-size:12px;letter-spacing:-0.067px;color:#6d6d6d">Can't redo</span>
<span class="t" style="left:266.70px;top:78.00px;height:16px;line-height:16px;font-size:12px;letter-spacing:-0.037px;color:#6d6d6d">Ctrl+Y</span>
<span class="t" style="left:75.40px;top:107.00px;height:16px;line-height:16px;font-size:12px;letter-spacing:-0.144px;">Cut</span>
<span class="t" style="left:266.70px;top:107.00px;height:16px;line-height:16px;font-size:12px;letter-spacing:-0.037px;">Ctrl+X</span>
<span class="t" style="left:75.40px;top:129.00px;height:16px;line-height:16px;font-size:12px;letter-spacing:-0.139px;">Copy</span>
<span class="t" style="left:265.50px;top:129.00px;height:16px;line-height:16px;font-size:12px;letter-spacing:0.071px;">Ctrl+C</span>
<span class="t" style="left:75.40px;top:151.00px;height:16px;line-height:16px;font-size:12px;letter-spacing:-0.772px;color:#6d6d6d">Paste</span>
<span class="t" style="left:266.70px;top:151.00px;height:16px;line-height:16px;font-size:12px;letter-spacing:-0.037px;color:#6d6d6d">Ctrl+V</span>
<span class="t" style="left:75.40px;top:173.00px;height:16px;line-height:16px;font-size:12px;letter-spacing:-0.488px;color:#6d6d6d">Paste as New Page</span>
<span class="t" style="left:234.60px;top:173.00px;height:16px;line-height:16px;font-size:12px;letter-spacing:0.082px;color:#6d6d6d">Shift+Ctrl+V</span>
<span class="t" style="left:75.40px;top:195.00px;height:16px;line-height:16px;font-size:12px;letter-spacing:-0.218px;color:#6d6d6d">Paste as New Document</span>
<span class="t" style="left:233.40px;top:195.00px;height:16px;line-height:16px;font-size:12px;letter-spacing:0.131px;color:#6d6d6d">Shift+Ctrl+D</span>
<span class="t" style="left:75.40px;top:217.00px;height:16px;line-height:16px;font-size:12px;letter-spacing:-0.417px;">Delete</span>
<span class="t" style="left:256.90px;top:217.00px;height:16px;line-height:16px;font-size:12px;letter-spacing:-0.055px;">Ctrl+Del</span>
<span class="t" style="left:75.40px;top:246.00px;height:16px;line-height:16px;font-size:12px;letter-spacing:-0.218px;">Select All</span>
<span class="t" style="left:265.50px;top:246.00px;height:16px;line-height:16px;font-size:12px;letter-spacing:0.203px;">Ctrl+A</span>
<span class="t" style="left:75.40px;top:268.00px;height:16px;line-height:16px;font-size:12px;letter-spacing:-0.228px;">Deselect All</span>
<span class="t" style="left:265.50px;top:268.00px;height:16px;line-height:16px;font-size:12px;letter-spacing:0.071px;">Ctrl+D</span>
<span class="t" style="left:75.40px;top:290.00px;height:16px;line-height:16px;font-size:12px;letter-spacing:-0.121px;">Invert selection</span>
<span class="t" style="left:270.80px;top:290.00px;height:16px;line-height:16px;font-size:12px;letter-spacing:0.077px;">Ctrl+I</span>
<span class="t" style="left:75.40px;top:319.00px;height:16px;line-height:16px;font-size:12px;letter-spacing:-0.200px;">Load selection mask...</span>
<span class="t" style="left:75.40px;top:341.00px;height:16px;line-height:16px;font-size:12px;letter-spacing:-0.327px;">Save selection mask...</span>
<span class="t" style="left:75.40px;top:370.00px;height:16px;line-height:16px;font-size:12px;letter-spacing:-0.127px;">Crop transparent parts</span>
<span class="t" style="left:234.60px;top:370.00px;height:16px;line-height:16px;font-size:12px;letter-spacing:0.082px;">Shift+Ctrl+X</span>
<span class="t" style="left:75.40px;top:392.00px;height:16px;line-height:16px;font-size:12px;letter-spacing:-0.017px;">Transform</span>
<span class="t" style="left:352.30px;top:393.00px;height:16px;line-height:16px;font-size:12px;letter-spacing:-0.068px;">Transform selection...</span>
<span class="t" style="left:510.40px;top:393.00px;height:16px;line-height:16px;font-size:12px;letter-spacing:0.040px;">Ctrl+T</span>
<span class="t" style="left:352.30px;top:421.80px;height:16px;line-height:16px;font-size:12px;letter-spacing:0.014px;">Flip horizontally</span>
<span class="t" style="left:352.30px;top:443.70px;height:16px;line-height:16px;font-size:12px;letter-spacing:-0.040px;">Flip vertically</span>
<span class="t" style="left:352.30px;top:465.70px;height:16px;line-height:16px;font-size:12px;letter-spacing:-0.256px;">Rotate 90 degrees left</span>
<span class="t" style="left:352.30px;top:487.70px;height:16px;line-height:16px;font-size:12px;letter-spacing:-0.215px;">Rotate 90 degrees right</span>
<span class="t" style="left:352.30px;top:509.70px;height:16px;line-height:16px;font-size:12px;letter-spacing:-0.395px;">Rotate 180 degrees</span>
<span class="t" style="left:248.00px;top:378.50px;height:34px;line-height:34px;font-size:30px;letter-spacing:-1.211px;color:rgba(255,255,255,0.4);font-weight:bold">SOFTPEDIA</span>
</body></html>
